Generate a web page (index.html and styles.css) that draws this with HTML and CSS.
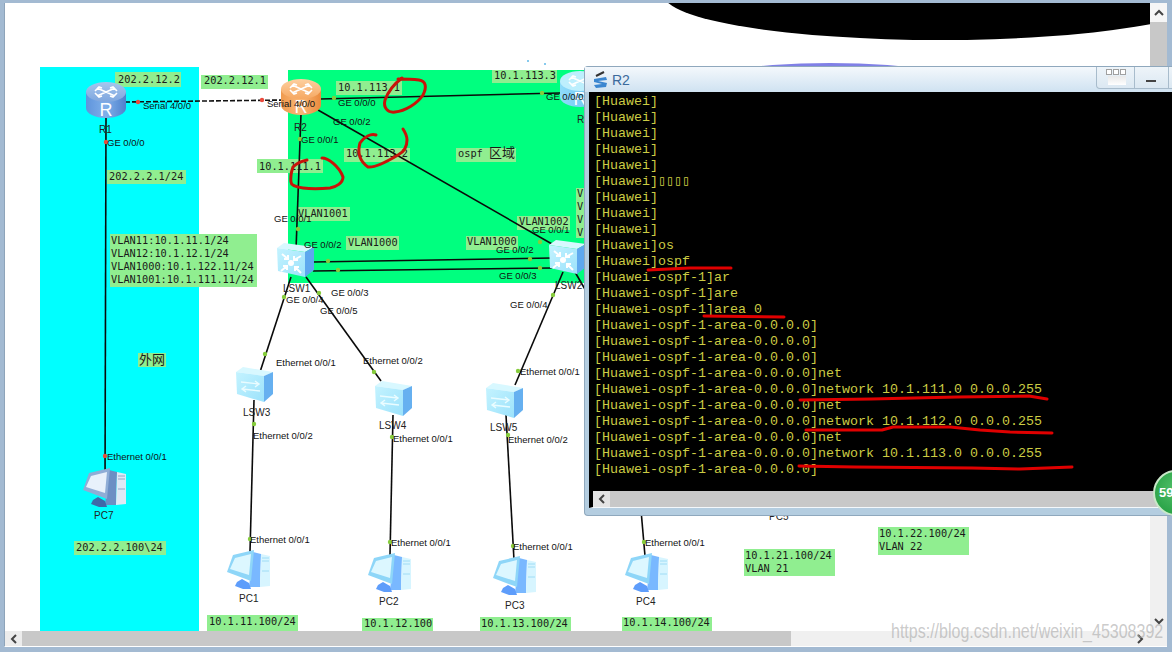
FILE: index.html
```html
<!DOCTYPE html>
<html lang="en">
<head>
<meta charset="utf-8">
<title>eNSP topology with R2 console</title>
<link rel="stylesheet" href="styles.css">
</head>
<body>
<div class="app">
  <div class="view">
    <div class="canvas">
      <svg class="topology" viewBox="5 3 1145 628" width="1145" height="628" xmlns="http://www.w3.org/2000/svg">
        <defs>
          <linearGradient id="blueSide" x1="0" x2="1" y1="0" y2="0"><stop offset="0" stop-color="#5f94dc"/><stop offset=".5" stop-color="#7fb0ea"/><stop offset="1" stop-color="#4f80cc"/></linearGradient>
          <linearGradient id="blueTop" x1="0" x2="0" y1="0" y2="1"><stop offset="0" stop-color="#a6c6ee"/><stop offset="1" stop-color="#7ea6de"/></linearGradient>
          <linearGradient id="orangeSide" x1="0" x2="1" y1="0" y2="0"><stop offset="0" stop-color="#ef9a4e"/><stop offset=".5" stop-color="#fbb878"/><stop offset="1" stop-color="#ea8a3c"/></linearGradient>
          <linearGradient id="orangeTop" x1="0" x2="0" y1="0" y2="1"><stop offset="0" stop-color="#fdd0a0"/><stop offset="1" stop-color="#f6a862"/></linearGradient>
          <linearGradient id="skySide" x1="0" x2="1" y1="0" y2="0"><stop offset="0" stop-color="#8fdcfa"/><stop offset="1" stop-color="#66c0f2"/></linearGradient>
          <linearGradient id="face" x1="0" x2="1" y1="0" y2="1"><stop offset="0" stop-color="#c4f3ff"/><stop offset="1" stop-color="#9ce2fb"/></linearGradient>
          <g id="cross">
            <path d="M20 10 L11 6 M20 10 L29 6 M20 10 L11 14 M20 10 L29 14 M9 9 L13 5 L16 6 M31 9 L27 5 L24 6 M9 11 L13 15 L16 14 M31 11 L27 15 L24 14" fill="none" stroke="#fff" stroke-width="1.6"/>
          </g>
          <symbol id="routerBlue" viewBox="0 0 40 36" width="40" height="36">
            <path d="M0 10V26A20 10 0 0 0 40 26V10Z" fill="url(#blueSide)"/>
            <ellipse cx="20" cy="10" rx="20" ry="10" fill="url(#blueTop)"/>
            <use href="#cross"/>
            <text class="router-r" x="20" y="34">R</text>
          </symbol>
          <symbol id="routerOrange" viewBox="0 0 40 36" width="40" height="36">
            <path d="M0 10V26A20 10 0 0 0 40 26V10Z" fill="url(#orangeSide)"/>
            <ellipse cx="20" cy="10" rx="20" ry="10" fill="url(#orangeTop)"/>
            <use href="#cross"/>
            <text class="router-r" x="20" y="34">R</text>
          </symbol>
          <symbol id="routerSky" viewBox="0 0 40 36" width="40" height="36">
            <path d="M0 10V26A20 10 0 0 0 40 26V10Z" fill="url(#skySide)"/>
            <ellipse cx="20" cy="10" rx="20" ry="10" fill="#bdeffd"/>
            <use href="#cross"/>
            <text class="router-r" x="20" y="34">R</text>
          </symbol>
          <symbol id="coreSwitch" viewBox="0 0 37 36" width="37" height="36">
            <path d="M0 5 7 0 37 4 28 9Z" fill="#d8f8ff"/>
            <path d="M28 9 37 4V27L28 34Z" fill="#5ea8ee"/>
            <path d="M0 5 28 9V34L1 28Z" fill="url(#face)"/>
            <circle cx="14" cy="20" r="3" fill="#fff"/>
            <path d="M5 11 11 16M11 12V16H7M24 13 17 17M17 13V17H21M4 28 10 23M10 27V23H6M24 30 18 24M18 28V24H22" fill="none" stroke="#fff" stroke-width="2"/>
          </symbol>
          <symbol id="accessSwitch" viewBox="0 0 37 36" width="37" height="36">
            <path d="M0 5 7 0 37 5 28 9Z" fill="#d8f8ff"/>
            <path d="M28 9 37 5V27L28 35Z" fill="#66b0f0"/>
            <path d="M0 5 28 9V35L1 27Z" fill="url(#face)"/>
            <path d="M5 15 23 17M19 14 23 17 19 20M24 24 6 22M10 19 6 22 10 25" fill="none" stroke="#eafcff" stroke-width="1.4"/>
          </symbol>
          <symbol id="pcGrey" viewBox="0 0 43 40" width="43" height="40">
            <path d="M26 2 34 4 33 37 22 37Z" fill="#6c8fc4"/>
            <path d="M34 4 43 6V36L33 37Z" fill="#dfe9f5"/>
            <path d="M35 8H42M35 11H42M35 21H42" stroke="#8fa6c8"/>
            <path d="M10 32 15 29 22 33 24 39 16 39 8 36Z" fill="#3f69a8"/>
            <path d="M6 5 27 0 24 31 0 22Z" fill="#8fadd6"/>
            <path d="M8 8 24 4 22 25 3 19Z" fill="#e8f1fb"/>
          </symbol>
          <symbol id="pcBlue" viewBox="0 0 43 40" width="43" height="40">
            <path d="M26 2 34 4 33 37 22 37Z" fill="#79b8ff"/>
            <path d="M34 4 43 6V36L33 37Z" fill="#d7f5ff"/>
            <path d="M35 8H42M35 11H42M35 21H42" stroke="#9fdcf5"/>
            <path d="M10 32 15 29 22 33 24 39 16 39 8 36Z" fill="#5e9dfb"/>
            <path d="M6 5 27 0 24 31 0 22Z" fill="#8ed6f8"/>
            <path d="M8 8 24 4 22 25 3 19Z" fill="#dcf7ff"/>
          </symbol>
        </defs>

        <ellipse class="blob-black" cx="940" cy="-5" rx="276" ry="45"/>
        <ellipse class="blob-purple" cx="830" cy="90" rx="150" ry="27"/>
        <rect class="zone-cyan" x="40" y="67" width="159" height="564"/>
        <rect class="zone-green" x="288" y="70" width="300" height="213"/>
        <circle class="speck" cx="528" cy="61" r="1"/>
        <circle class="speck" cx="545" cy="64" r="1"/>

        <g class="tag-bg">
          <rect x="115" y="72" width="66" height="15"/>
          <rect x="201" y="75" width="67" height="14"/>
          <rect x="336" y="81" width="66" height="14"/>
          <rect x="492" y="70" width="65" height="13"/>
          <rect x="257" y="159" width="66" height="14"/>
          <rect x="344" y="148" width="66" height="14"/>
          <rect x="456" y="148" width="60" height="14"/>
          <rect x="298" y="207" width="52" height="14"/>
          <rect x="346" y="236" width="53" height="14"/>
          <rect x="466" y="236" width="52" height="14"/>
          <rect x="517" y="216" width="53" height="14"/>
          <rect x="576" y="188" width="9" height="50"/>
          <rect x="107" y="170" width="79" height="14"/>
          <rect x="110" y="234" width="147" height="53"/>
          <rect x="138" y="353" width="28" height="14"/>
          <rect x="74" y="541" width="92" height="14"/>
          <rect x="207" y="615" width="91" height="16"/>
          <rect x="362" y="618" width="71" height="13"/>
          <rect x="480" y="617" width="91" height="14"/>
          <rect x="622" y="617" width="90" height="14"/>
          <rect x="744" y="549" width="91" height="27"/>
          <rect x="878" y="527" width="91" height="28"/>
        </g>

        <g class="links">
          <path d="M106 118 105 490"/>
          <path d="M320 99 560 93"/>
          <path d="M318 110 552 244"/>
          <path d="M301 114 296 250"/>
          <path d="M313 262 552 258"/>
          <path d="M313 271 552 268"/>
          <path d="M291 277 260 372"/>
          <path d="M306 277 381 381"/>
          <path d="M254 400 250 552"/>
          <path d="M393 415 390 555"/>
          <path d="M563 272 515 385"/>
          <path d="M506 415 514 560"/>
          <path d="M575 272 590 298"/>
          <path d="M641 510 645 556"/>
        </g>
        <path class="link-dashed" d="M125 102 285 100"/>

        <g class="dots-red">
          <circle cx="138" cy="102" r="2.2"/>
          <circle cx="262" cy="100" r="2.2"/>
          <circle cx="106" cy="142" r="2.2"/>
          <circle cx="105" cy="456" r="2.2"/>
        </g>
        <g class="dots-green">
          <circle cx="334" cy="98" r="2.2"/>
          <circle cx="542" cy="93" r="2.2"/>
          <circle cx="300" cy="139" r="2.2"/>
          <circle cx="298" cy="229" r="2.2"/>
          <circle cx="540" cy="242" r="2.2"/>
          <circle cx="328" cy="261" r="2.2"/>
          <circle cx="530" cy="259" r="2.2"/>
          <circle cx="338" cy="270" r="2.2"/>
          <circle cx="540" cy="268" r="2.2"/>
          <circle cx="284" cy="297" r="2.2"/>
          <circle cx="265" cy="354" r="2.2"/>
          <circle cx="319" cy="293" r="2.2"/>
          <circle cx="374" cy="372" r="2.2"/>
          <circle cx="254" cy="424" r="2.2"/>
          <circle cx="250" cy="539" r="2.2"/>
          <circle cx="392" cy="437" r="2.2"/>
          <circle cx="390" cy="542" r="2.2"/>
          <circle cx="553" cy="295" r="2.2"/>
          <circle cx="518" cy="371" r="2.2"/>
          <circle cx="508" cy="435" r="2.2"/>
          <circle cx="513" cy="546" r="2.2"/>
          <circle cx="644" cy="542" r="2.2"/>
        </g>

        <use href="#routerBlue" x="86" y="82"/>
        <use href="#routerOrange" x="281" y="79"/>
        <use href="#routerSky" x="560" y="71"/>
        <use href="#coreSwitch" x="277" y="243"/>
        <use href="#coreSwitch" x="549" y="240"/>
        <use href="#accessSwitch" x="236" y="367"/>
        <use href="#accessSwitch" x="375" y="381"/>
        <use href="#accessSwitch" x="486" y="383"/>
        <use href="#pcGrey" x="83" y="468"/>
        <use href="#pcBlue" x="227" y="550"/>
        <use href="#pcBlue" x="368" y="553"/>
        <use href="#pcBlue" x="493" y="556"/>
        <use href="#pcBlue" x="625" y="553"/>

        <g class="tag">
          <text x="118" y="83">202.2.12.2</text>
          <text x="204" y="84">202.2.12.1</text>
          <text x="338" y="91">10.1.113.1</text>
          <text x="494" y="79">10.1.113.3</text>
          <text x="259" y="170">10.1.111.1</text>
          <text x="346" y="157">10.1.113.2</text>
          <text x="458" y="157">ospf <tspan class="tag-cjk">区域</tspan></text>
          <text x="298" y="217">VLAN1001</text>
          <text x="348" y="246">VLAN1000</text>
          <text x="467" y="245">VLAN1000</text>
          <text x="519" y="225">VLAN1002</text>
          <text x="577" y="197">V</text>
          <text x="577" y="210">V</text>
          <text x="577" y="223">V</text>
          <text x="577" y="236">V</text>
          <text x="109" y="180">202.2.2.1/24</text>
          <text x="111" y="244">VLAN11:10.1.11.1/24</text>
          <text x="111" y="257">VLAN12:10.1.12.1/24</text>
          <text x="111" y="270">VLAN1000:10.1.122.11/24</text>
          <text x="111" y="283">VLAN1001:10.1.111.11/24</text>
          <text x="139" y="364"><tspan class="tag-cjk-big">外网</tspan></text>
          <text x="76" y="551">202.2.2.100\24</text>
          <text x="209" y="625">10.1.11.100/24</text>
          <text x="364" y="627">10.1.12.100</text>
          <text x="481" y="627">10.1.13.100/24</text>
          <text x="623" y="626">10.1.14.100/24</text>
          <text x="745" y="559">10.1.21.100/24</text>
          <text x="745" y="572">VLAN 21</text>
          <text x="879" y="537">10.1.22.100/24</text>
          <text x="879" y="550">VLAN 22</text>
        </g>

        <g class="port">
          <text x="143" y="109">Serial 4/0/0</text>
          <text x="267" y="107">Serial 4/0/0</text>
          <text x="107" y="146">GE 0/0/0</text>
          <text x="338" y="106">GE 0/0/0</text>
          <text x="333" y="125">GE 0/0/2</text>
          <text x="301" y="143">GE 0/0/1</text>
          <text x="274" y="222">GE 0/0/1</text>
          <text x="304" y="248">GE 0/0/2</text>
          <text x="286" y="303">GE 0/0/4</text>
          <text x="331" y="296">GE 0/0/3</text>
          <text x="320" y="314">GE 0/0/5</text>
          <text x="276" y="366">Ethernet 0/0/1</text>
          <text x="363" y="364">Ethernet 0/0/2</text>
          <text x="253" y="439">Ethernet 0/0/2</text>
          <text x="393" y="442">Ethernet 0/0/1</text>
          <text x="250" y="543">Ethernet 0/0/1</text>
          <text x="391" y="546">Ethernet 0/0/1</text>
          <text x="513" y="550">Ethernet 0/0/1</text>
          <text x="645" y="546">Ethernet 0/0/1</text>
          <text x="107" y="460">Ethernet 0/0/1</text>
          <text x="532" y="233">GE 0/0/1</text>
          <text x="496" y="253">GE 0/0/2</text>
          <text x="499" y="279">GE 0/0/3</text>
          <text x="510" y="308">GE 0/0/4</text>
          <text x="546" y="100">GE 0/0/0</text>
          <text x="520" y="375">Ethernet 0/0/1</text>
          <text x="508" y="443">Ethernet 0/0/2</text>
        </g>
        <g class="device">
          <text x="99" y="133">R1</text>
          <text x="294" y="131">R2</text>
          <text x="577" y="123">R</text>
          <text x="283" y="292">LSW1</text>
          <text x="555" y="289">LSW2</text>
          <text x="243" y="416">LSW3</text>
          <text x="379" y="429">LSW4</text>
          <text x="490" y="431">LSW5</text>
          <text x="94" y="519">PC7</text>
          <text x="239" y="602">PC1</text>
          <text x="379" y="605">PC2</text>
          <text x="505" y="609">PC3</text>
          <text x="636" y="605">PC4</text>
          <text x="769" y="520">PC5</text>
        </g>

        <g class="scribble">
          <path d="M402 78C394 84 388 92 385 100C383 108 388 113 395 112C405 111 417 104 423 95C427 87 426 81 419 80C411 79 404 79 398 79"/>
          <path d="M376 135C371 133 364 137 360 143C358 150 358 160 368 167C375 168 388 161 398 155C404 152 407 146 407 140C407 135 405 132 403 129"/>
          <path d="M322 158C328 158 339 166 343 177C343 183 336 187 330 188C320 189 310 189 303 188C296 187 291 185 291 182C290 175 292 170 293 167C297 163 302 161 307 160"/>
        </g>
      </svg>
    </div>
    <div class="vbar">
      <span class="vbar-up"><svg class="chevron" viewBox="0 0 10 7" width="10" height="7" xmlns="http://www.w3.org/2000/svg"><path d="M1 6 5 2 9 6"/></svg></span>
      <span class="vbar-thumb"></span>
      <span class="vbar-down"><svg class="chevron" viewBox="0 0 10 7" width="10" height="7" xmlns="http://www.w3.org/2000/svg"><path d="M1 1 5 5 9 1"/></svg></span>
    </div>
  </div>
  <div class="hbar">
    <span class="hbar-left"><svg class="chevron" viewBox="0 0 7 10" width="7" height="10" xmlns="http://www.w3.org/2000/svg"><path d="M6 1 2 5 6 9"/></svg></span>
    <span class="hbar-thumb"></span>
    <span class="hbar-right"><svg class="chevron" viewBox="0 0 7 10" width="7" height="10" xmlns="http://www.w3.org/2000/svg"><path d="M1 1 5 5 1 9"/></svg></span>
  </div>

  <section class="console">
    <header class="console-title">
      <svg class="console-icon" viewBox="0 0 15 18" width="15" height="18" xmlns="http://www.w3.org/2000/svg">
        <path d="M3 5 11 1" stroke="#333" stroke-width="2"/>
        <path d="M1 8 13 6 14 9 5 10 14 12 13 16 3 17 1 14 9 13 1 11Z" fill="#3b86d0"/>
      </svg>
      <span class="console-name">R2</span>
      <div class="console-controls">
        <span class="control-tile"><i></i><i></i><i></i></span>
        <span class="control-min"></span>
      </div>
    </header>
    <pre class="console-text">[Huawei]
[Huawei]
[Huawei]
[Huawei]
[Huawei]
[Huawei]▯▯▯▯
[Huawei]
[Huawei]
[Huawei]
[Huawei]os
[Huawei]ospf
[Huawei-ospf-1]ar
[Huawei-ospf-1]are
[Huawei-ospf-1]area 0
[Huawei-ospf-1-area-0.0.0.0]
[Huawei-ospf-1-area-0.0.0.0]
[Huawei-ospf-1-area-0.0.0.0]
[Huawei-ospf-1-area-0.0.0.0]net
[Huawei-ospf-1-area-0.0.0.0]network 10.1.111.0 0.0.0.255
[Huawei-ospf-1-area-0.0.0.0]net
[Huawei-ospf-1-area-0.0.0.0]network 10.1.112.0 0.0.0.255
[Huawei-ospf-1-area-0.0.0.0]net
[Huawei-ospf-1-area-0.0.0.0]network 10.1.113.0 0.0.0.255
[Huawei-ospf-1-area-0.0.0.0]</pre>
    <div class="console-hbar"><span class="console-left"><svg class="chevron" viewBox="0 0 7 10" width="7" height="10" xmlns="http://www.w3.org/2000/svg"><path d="M6 1 2 5 6 9"/></svg></span></div>
  </section>

  <svg class="ink" viewBox="0 0 1172 652" width="1172" height="652" xmlns="http://www.w3.org/2000/svg">
    <path d="M648 270 690 268 731 268"/>
    <path d="M704 316 784 317"/>
    <path d="M800 400 871 399 957 397 1029 396 1047 399"/>
    <path d="M806 430 882 430 893 427 950 427 980 430 1010 432 1052 433"/>
    <path d="M799 466 855 467 972 468 1020 469 1072 467"/>
  </svg>

  <div class="badge">59</div>
  <div class="watermark">https://blog.csdn.net/weixin_45308392</div>
</div>
</body>
</html>
```
FILE: styles.css
```css
html, body {
  margin: 0;
  padding: 0;
  width: 1172px;
  height: 652px;
  overflow: hidden;
}

.app {
  position: relative;
  box-sizing: border-box;
  width: 1172px;
  height: 652px;
  padding: 3px 5px 5px 4px;
  display: flex;
  flex-direction: column;
  background: #a3bad2;
  overflow: hidden;
  font-family: "Liberation Sans", Arial, sans-serif;
}

.view {
  display: flex;
  height: 628px;
  border-left: 1px solid #8ea4ba;
}

.canvas {
  flex: 1;
  background: #fff;
  overflow: hidden;
}

.topology { display: block; }

.blob-black { fill: #000; }
.blob-purple { fill: #8080e6; }
.zone-cyan { fill: #00ffff; }
.zone-green { fill: #00ff7f; }
.speck { fill: #5fb8e8; }
.tag-bg rect { fill: #90ee90; }

.links path {
  fill: none;
  stroke: #0a0a0a;
  stroke-width: 1.6;
}
.link-dashed {
  fill: none;
  stroke: #111;
  stroke-width: 1.6;
  stroke-dasharray: 5 2;
}
.dots-red circle { fill: #ea4a3c; }
.dots-green circle { fill: #86cc3c; }

.router-r {
  font: 18px "Liberation Sans", Arial, sans-serif;
  fill: #fff;
  text-anchor: middle;
}

.tag text {
  font: 10.3px "DejaVu Sans Mono", "Liberation Mono", monospace;
  fill: #1a1a1a;
}
.tag-cjk { font: 13px "Noto Sans CJK SC", sans-serif; }
.tag-cjk-big { font: 13px "Noto Sans CJK SC", sans-serif; }

.port text {
  font: 9.5px "Liberation Sans", Arial, sans-serif;
  fill: #111;
}
.device text {
  font: 10px "Liberation Sans", Arial, sans-serif;
  fill: #222;
}

.scribble path {
  fill: none;
  stroke: #c8140a;
  stroke-width: 3;
  stroke-linecap: round;
  stroke-linejoin: round;
}

.chevron {
  display: block;
}
.chevron path {
  fill: none;
  stroke: #444;
  stroke-width: 2;
}

.vbar {
  width: 17px;
  flex: none;
  display: flex;
  flex-direction: column;
  align-items: stretch;
  background: #f0f0f0;
}
.vbar-up {
  height: 19px;
  display: flex;
  justify-content: center;
  align-items: center;
  background: #f6f6f6;
}
.vbar-thumb {
  height: 300px;
  background: #c8c8c8;
}
.vbar-down {
  margin-top: auto;
  height: 20px;
  display: flex;
  justify-content: center;
  align-items: center;
}

.hbar {
  display: flex;
  align-items: stretch;
  height: 16px;
  border-left: 1px solid #8ea4ba;
  border-bottom: 1px solid #fff;
  background: #f0f0f0;
}
.hbar-left {
  width: 17px;
  display: flex;
  justify-content: center;
  align-items: center;
  background: #ececec;
}
.hbar-thumb {
  width: 769px;
  background: #c8c8c8;
}
.hbar-right {
  margin-left: auto;
  margin-right: 23px;
  display: flex;
  align-items: center;
}

/* floating console window */
.console {
  position: absolute;
  left: 584px;
  top: 66px;
  width: 600px;
  height: 450px;
  box-sizing: border-box;
  display: flex;
  flex-direction: column;
  padding: 0 0 7px 4px;
  background: #b4cde0;
  border: 1px solid #8fa8bd;
  border-right: 0;
  border-radius: 4px 0 0 4px;
}
.console-title {
  display: flex;
  align-items: center;
  gap: 4px;
  height: 25px;
  margin-left: -4px;
  padding-left: 8px;
  flex: none;
  background: linear-gradient(#f4f8fc, #cfe2f1);
  position: relative;
}
.console-icon { flex: none; }
.console-name {
  font-size: 14px;
  color: #3b6a9c;
}
.console-controls {
  position: absolute;
  left: 511px;
  top: 0;
  width: 90px;
  height: 21px;
  display: flex;
  border: 1px solid #a8bccc;
  border-top: 0;
  border-radius: 0 0 0 4px;
  background: linear-gradient(#eef4f9, #dbe8f2);
}
.control-tile {
  width: 38px;
  border-right: 1px solid #a8bccc;
  display: flex;
  justify-content: center;
  gap: 1px;
  padding-top: 2px;
  box-sizing: border-box;
  position: relative;
}
.control-tile i {
  width: 4px;
  height: 4px;
  border: 1px solid #a0a0a0;
  background: #fff;
}
.control-tile::after {
  content: "";
  position: absolute;
  left: 11px;
  top: 9px;
  width: 18px;
  height: 9px;
  background: linear-gradient(#e8e8e8, #fff);
}
.control-min {
  width: 33px;
  border-right: 1px solid #a8bccc;
  position: relative;
}
.control-min::after {
  content: "";
  position: absolute;
  left: 11px;
  top: 13px;
  width: 10px;
  height: 2px;
  background: #444;
}
.console-text {
  margin: 0;
  flex: 1;
  padding: 2px 0 0 5px;
  background: #000;
  color: #cccc44;
  font: 13.33px/16px "Liberation Mono", "DejaVu Sans Mono", monospace;
  overflow: hidden;
}
.console-hbar {
  flex: none;
  height: 17px;
  background: #c8c8c8;
  border-left: 4px solid #000;
  border-bottom: 1px solid #f4f8fb;
  box-sizing: border-box;
}
.console-left {
  width: 17px;
  height: 100%;
  display: flex;
  justify-content: center;
  align-items: center;
  background: #e4e4e4;
}

.ink {
  position: absolute;
  left: 0;
  top: 0;
  pointer-events: none;
}
.ink path {
  fill: none;
  stroke: #e00000;
  stroke-width: 3;
  stroke-linecap: round;
  stroke-linejoin: round;
}

.badge {
  position: absolute;
  left: 1153px;
  top: 470px;
  width: 46px;
  height: 46px;
  box-sizing: border-box;
  border: 2px solid #c9e8c9;
  border-radius: 50%;
  background: radial-gradient(circle at 50% 40%, #52c06a, #1d9a3c);
  color: #fff;
  font-size: 13px;
  font-weight: 700;
  line-height: 42px;
  padding-left: 4px;
}

.watermark {
  position: absolute;
  left: 891px;
  top: 621px;
  font-size: 16px;
  line-height: 22px;
  color: rgba(170, 170, 170, .62);
  white-space: nowrap;
  transform: scaleY(1.25);
}
```
